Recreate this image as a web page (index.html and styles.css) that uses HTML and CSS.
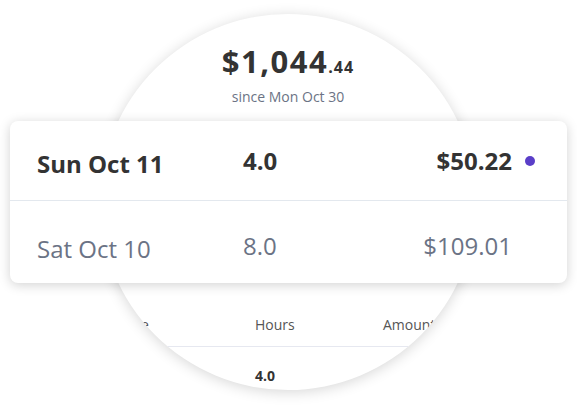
FILE: index.html
```html
<!DOCTYPE html>
<html lang="en">
<head>
    <meta charset="UTF-8">
    <meta name="viewport" content="width=device-width, initial-scale=1.0">
    <title>Earnings</title>
    <link rel="stylesheet" href="styles.css">
</head>
<body>

    <div class="stage">
        <div class="lens">
            <div class="total">$1,044<span class="total-cents">.44</span></div>
            <div class="since">since Mon Oct 30</div>

            <div class="table">
                <div class="table-head">
                    <span>Date</span>
                    <span>Hours</span>
                    <span>Amount</span>
                </div>
                <div class="table-row">
                    <span>Sun Oct 11</span>
                    <span>4.0</span>
                    <span>$50.22</span>
                </div>
            </div>
        </div>

        <div class="card">
            <div class="row row-active">
                <span class="date">Sun Oct 11</span>
                <span class="hours">4.0</span>
                <span class="amount">$50.22</span>
                <span class="dot"></span>
            </div>
            <div class="row row-past">
                <span class="date">Sat Oct 10</span>
                <span class="hours">8.0</span>
                <span class="amount">$109.01</span>
                <span></span>
            </div>
        </div>
    </div>

</body>
</html>
```

FILE: styles.css
```css
* {
    margin: 0;
    padding: 0;
    box-sizing: border-box;
}
body {
    font-family: "Open Sans", Arial, sans-serif;
    background-color: #fff;
    color: #333;
    width: 577px;
    height: 405px;
    overflow: hidden;
}
.stage {
    position: relative;
    width: 577px;
    height: 405px;
    padding-top: 14px;
}
.lens {
    width: 376px;
    height: 376px;
    margin-left: 100px;
    border-radius: 50%;
    overflow: hidden;
    background-color: #fff;
    box-shadow: 0 2px 14px rgba(0, 0, 0, 0.16);
    padding-top: 27px;
    display: flex;
    flex-direction: column;
    align-items: center;
}
.total {
    font-size: 31px;
    line-height: 40px;
    letter-spacing: 1.5px;
    font-weight: 700;
    color: #333;
}
.total-cents {
    font-size: 16px;
    line-height: 1;
    letter-spacing: 1px;
}
.since {
    margin-top: 7px;
    font-size: 14px;
    line-height: 18px;
    color: #6b7385;
}
.table {
    width: 100%;
    margin-top: 210px;
    font-size: 14px;
    line-height: 18px;
}
.table-head,
.table-row {
    display: grid;
    grid-template-columns: 137px 128px auto;
    padding-left: 18px;
}
.table-head {
    color: #555;
    padding-bottom: 12px;
    border-bottom: 1px solid #e6e8f0;
}
.table-row {
    padding-top: 20px;
    font-weight: 700;
}
.card {
    position: absolute;
    left: 10px;
    top: 121px;
    width: 557px;
    background-color: #fff;
    border-radius: 8px;
    box-shadow: 0 2px 12px rgba(0, 0, 0, 0.18);
}
.row {
    display: grid;
    grid-template-columns: 206px 1fr auto 10px;
    align-items: center;
    padding: 0 32px 0 27px;
}
.row-active {
    height: 80px;
    color: #333;
    font-weight: 700;
    border-bottom: 1px solid #e3e8ee;
}
.row-past {
    height: 82px;
    padding-top: 7px;
    color: #6b7385;
}
.date {
    font-size: 24px;
    margin-top: 6px;
}
.hours,
.amount {
    font-size: 24px;
    margin-top: -1px;
}
.amount {
    margin-right: 13px;
}
.dot {
    width: 10px;
    height: 10px;
    border-radius: 50%;
    background-color: #5a3ec8;
}
```
